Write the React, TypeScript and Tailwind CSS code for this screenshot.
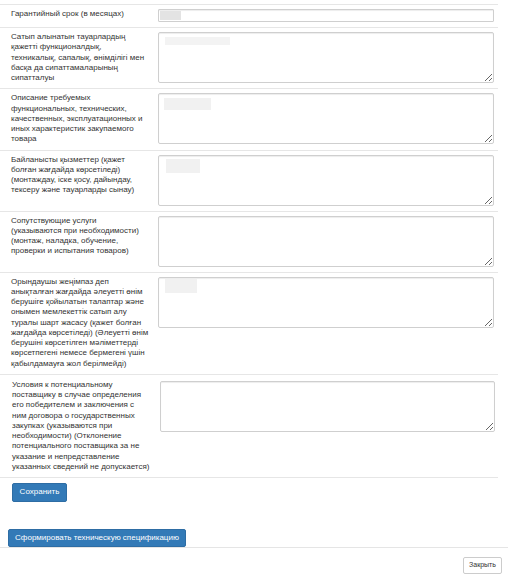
import React from 'react';

type Field = { lines: string[]; kind: 'input' | 'textarea'; blur?: string };

const fields: Field[] = [
  { lines: ["Гарантийный срок (в месяцах)"], kind: 'input', blur: "left-[2px] top-[2px] w-[21px] h-[9px] bg-[#e3e3e3]" },
  {
    lines: ["Сатып алынатын тауарлардың", "қажетті функционалдық,", "техникалық, сапалық, өнімділігі мен", "басқа да сипаттамаларының", "сипатталуы"],
    kind: 'textarea', blur: "left-[7px] top-[5px] w-[65px] h-[8px] bg-[#f3f3f3]",
  },
  {
    lines: ["Описание требуемых", "функциональных, технических,", "качественных, эксплуатационных и", "иных характеристик закупаемого", "товара"],
    kind: 'textarea', blur: "left-[6px] top-[5px] w-[47px] h-[12px] bg-[#f1f1f1]",
  },
  {
    lines: ["Байланысты қызметтер (қажет", "болған жағдайда көрсетіледі)", "(монтаждау, іске қосу, дайындау,", "тексеру және тауарларды сынау)"],
    kind: 'textarea', blur: "left-[8px] top-[4px] w-[34px] h-[14px] bg-[#f1f1f1]",
  },
  {
    lines: ["Сопутствующие услуги", "(указываются при необходимости)", "(монтаж, наладка, обучение,", "проверки и испытания товаров)"],
    kind: 'textarea',
  },
  {
    lines: [
      "Орындаушы жеңімпаз деп", "анықталған жағдайда әлеуетті өнім", "берушіге қойылатын талаптар және",
      "онымен мемлекеттік сатып алу", "туралы шарт жасасу (қажет болған", "жағдайда көрсетіледі) (Әлеуетті өнім",
      "берушіні көрсетілген мәліметтерді", "көрсетпегені немесе бермегені үшін", "қабылдамауға жол берілмейді)",
    ],
    kind: 'textarea', blur: "left-[7px] top-[2px] w-[32px] h-[14px] bg-[#f1f1f1]",
  },
];

const lastLines = [
  "Условия к потенциальному", "поставщику в случае определения", "его победителем и заключения с",
  "ним договора о государственных", "закупках (указываются при", "необходимости) (Отклонение",
  "потенциального поставщика за не", "указание и непредставление", "указанных сведений не допускается)",
];

function Label({ lines }: { lines: string[] }) {
  return (
    <>
      {lines.map((l, i) => (
        <div key={i} className="whitespace-nowrap">{l}</div>
      ))}
    </>
  );
}

function Control({ kind, blur }: { kind: 'input' | 'textarea'; blur?: string }) {
  return (
    <div className="relative">
      {kind === 'input' ? (
        <input className="block w-full h-[13px] border border-[#cfcfcf] rounded-[1px] bg-white shadow-[inset_0_1px_1px_rgba(0,0,0,0.075)] outline-none" />
      ) : (
        <textarea className="block w-full h-[51px] border border-[#cfcfcf] rounded-[2px] bg-white shadow-[inset_0_1px_1px_rgba(0,0,0,0.075)] outline-none" />
      )}
      {blur && <div className={`absolute pointer-events-none ${blur}`} />}
    </div>
  );
}

export default function App() {
  return (
    <div className="w-[508px] h-[581px] bg-white text-[#333] text-[8px] leading-[10.25px] overflow-hidden" style={{ fontFamily: '"Liberation Sans", Arial, sans-serif' }}>
      <div className="pt-[4px] w-[498px]">
        {fields.map((f, i) => (
          <div key={i} className="flex border-t border-[#e6e6e6]">
            <div className="w-[157px] shrink-0 pl-[11px] pr-[4px] pt-[4px] pb-[5px]">
              <Label lines={f.lines} />
            </div>
            <div className="flex-1 pl-[1px] pr-[4px] pt-[4px] pb-[5px]">
              <Control kind={f.kind} blur={f.blur} />
            </div>
          </div>
        ))}
        <div className="flex border-t border-[#e6e6e6]">
          <div className="w-[159px] shrink-0 pl-[12px] pr-[4px] pt-[5px] pb-[5px]">
            <Label lines={lastLines} />
          </div>
          <div className="flex-1 pl-[1px] pr-[3px] pt-[6px] pb-[5px]">
            <Control kind="textarea" />
          </div>
        </div>
        <div className="border-t border-[#e6e6e6] pt-[5px] pl-[12px]">
          <button className="h-[19px] w-[55px] bg-[#337ab7] border border-[#2e6da4] rounded-[2px] text-white text-[8px]">Сохранить</button>
        </div>
      </div>
      <div className="pt-[27px] pl-[8px]">
        <button className="h-[18px] w-[178px] bg-[#337ab7] border border-[#2e6da4] rounded-[2px] text-white text-[8px]">Сформировать техническую спецификацию</button>
      </div>
      <div className="border-t border-[#e5e5e5] flex justify-end pt-[9px] pr-[6px]">
        <button className="h-[17px] w-[39px] bg-white border border-[#ccc] rounded-[2px] text-[#333] text-[7px]">Закрыть</button>
      </div>
    </div>
  );
}
